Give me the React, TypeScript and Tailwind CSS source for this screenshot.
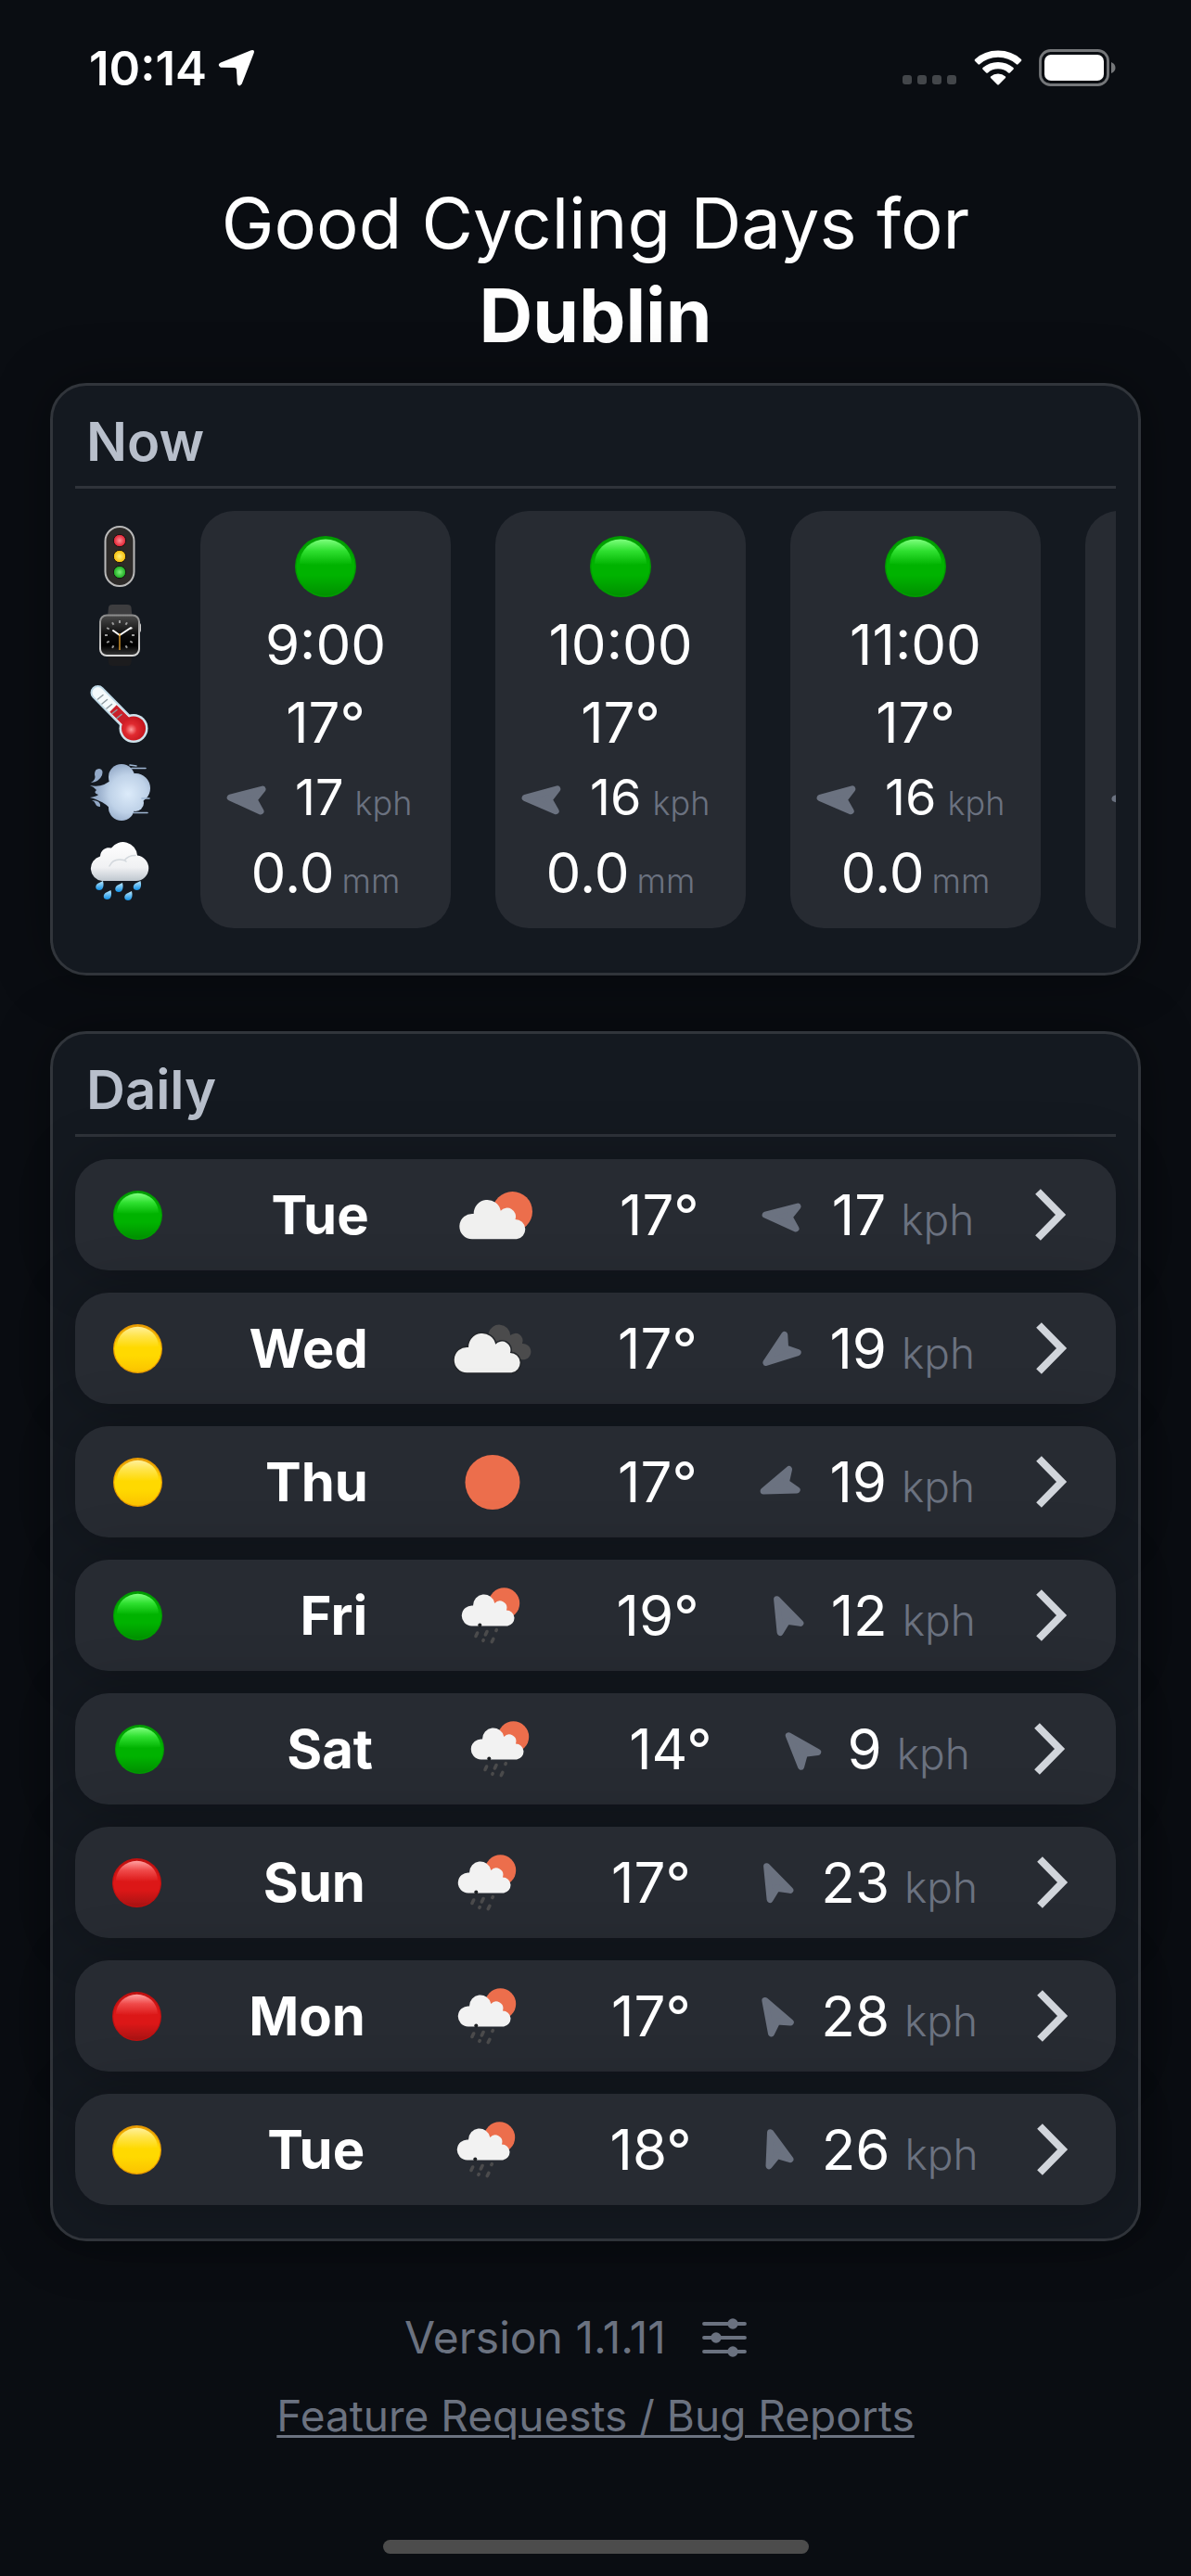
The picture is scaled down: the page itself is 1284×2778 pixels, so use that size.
import React from "react";

type Level = "green" | "yellow" | "red";
type Sky = "sun" | "partly" | "cloudy" | "rain";

interface Reading {
  time: string;
  temp: string;
  wind: string;
  rain: string;
}

interface Hour {
  heading: number;
  reading?: Reading;
}

interface Day {
  level: Level;
  name: string;
  sky: Sky;
  temp: string;
  wind: string;
  heading: number;
}

const hours: Hour[] = [
  { heading: -85, reading: { time: "9:00", temp: "17°", wind: "17", rain: "0.0" } },
  { heading: -86, reading: { time: "10:00", temp: "17°", wind: "16", rain: "0.0" } },
  { heading: -86, reading: { time: "11:00", temp: "17°", wind: "16", rain: "0.0" } },
  { heading: -88 },
];

const days: Day[] = [
  { level: "green", name: "Tue", sky: "partly", temp: "17°", wind: "17", heading: -85 },
  { level: "yellow", name: "Wed", sky: "cloudy", temp: "17°", wind: "19", heading: -127 },
  { level: "yellow", name: "Thu", sky: "sun", temp: "17°", wind: "19", heading: -111 },
  { level: "green", name: "Fri", sky: "rain", temp: "19°", wind: "12", heading: -25 },
  { level: "green", name: "Sat", sky: "rain", temp: "14°", wind: "9", heading: -41 },
  { level: "red", name: "Sun", sky: "rain", temp: "17°", wind: "23", heading: -25 },
  { level: "red", name: "Mon", sky: "rain", temp: "17°", wind: "28", heading: -30 },
  { level: "yellow", name: "Tue", sky: "rain", temp: "18°", wind: "26", heading: -17 },
];

const orbColors: Record<Level, { rim: string; gloss: string; mid: string; base: string; low: string }> = {
  green: { rim: "#009c00", gloss: "#7dff7d", mid: "#2fe030", base: "#00b300", low: "#009000" },
  yellow: { rim: "#e79a00", gloss: "#fff09a", mid: "#ffe44a", base: "#ffd900", low: "#fbc300" },
  red: { rim: "#c01010", gloss: "#ffa0a0", mid: "#f04a4a", base: "#dc1717", low: "#a81313" },
};

function Orb({ level, className }: { level: Level; className: string }) {
  const id = React.useId();
  const c = orbColors[level];
  return (
    <svg viewBox="0 0 66 66" className={className} role="img" aria-label={level}>
      <defs>
        <linearGradient id={id + "b"} x1="0" y1="0" x2="0" y2="1">
          <stop offset="0" stopColor={c.rim} />
          <stop offset="0.45" stopColor={c.base} />
          <stop offset="0.65" stopColor={c.base} />
          <stop offset="1" stopColor={c.low} />
        </linearGradient>
        <linearGradient id={id + "g"} x1="0" y1="0" x2="0" y2="1">
          <stop offset="0" stopColor={c.gloss} />
          <stop offset="0.45" stopColor={c.mid} />
          <stop offset="1" stopColor={c.base} />
        </linearGradient>
      </defs>
      <circle cx="33" cy="33" r="33" fill={c.rim} />
      <circle cx="33" cy="33" r="31.5" fill={`url(#${id}b)`} />
      <path d="M5 30A28 26.500 0 0 1 61 30Q33 33 5 30Z" fill={`url(#${id}g)`} />
    </svg>
  );
}

function WindArrow({ heading }: { heading: number }) {
  return (
    <svg viewBox="0 0 60 60" className="h-15 w-15 shrink-0" aria-hidden="true">
      <g transform={`rotate(${heading} 30 33)`}>
        <path d="M31 11L43 45L31 37L19 45Z" fill="#6b7280" stroke="#6b7280" strokeWidth="7" strokeLinejoin="round" />
      </g>
    </svg>
  );
}

const CLOUD =
  "M36 86.300A13.700 13.700 0 1 1 37.700 59A14.700 14.700 0 0 1 66.800 55.700A9.300 9.300 0 0 1 82.500 65A10.700 10.700 0 0 1 84 86.300Z";

function SkyIcon({ sky }: { sky: Sky }) {
  return (
    <svg viewBox="0 0 120 120" className="h-30 w-30" role="img" aria-label={sky}>
      {sky === "sun" && <circle cx="60" cy="60.500" r="29.500" fill="#ec6e4c" />}
      {sky === "partly" && (
        <>
          <circle cx="79.500" cy="56.500" r="21.500" fill="#ec6e4c" />
          <path d={CLOUD} fill="#f0f0ef" />
        </>
      )}
      {sky === "cloudy" && (
        <>
          <path
            d="M55.500 44A12 12 0 0 1 79.200 46A8 8 0 0 1 92 55A8.700 8.700 0 1 1 88 71L70 62Z"
            fill="#4b4b4c"
          />
          <g transform="translate(-3.600 0)">
            <path d={CLOUD} fill="#f0f0ef" stroke="#23262a" strokeWidth="3" paintOrder="stroke" />
          </g>
        </>
      )}
      {sky === "rain" && (
        <>
          <circle cx="73.500" cy="47" r="16.700" fill="#ec6e4c" />
          <g transform="translate(9.900 2.400) scale(0.800)">
            <path d={CLOUD} fill="#f2f2f2" />
          </g>
          <circle cx="47.300" cy="70.500" r="2" fill="#1e2124" />
          <g stroke="#4b4b4c" strokeWidth="3.600" strokeLinecap="round">
            <path d="M44.600 79L43 82.500M55 77.500L53.400 81M65.300 75.700L64.900 76.500M51.200 86.600L50.900 87.300M61.800 85.400L60.300 88.600" />
          </g>
        </>
      )}
    </svg>
  );
}

function TrafficLight() {
  return (
    <svg viewBox="0 0 66 66" className="h-[66px] w-[66px]" role="img" aria-label="Rating">
      <defs>
        <radialGradient id="tlr"><stop offset="0" stopColor="#ff8f96" /><stop offset="1" stopColor="#e01b2c" /></radialGradient>
        <radialGradient id="tly"><stop offset="0" stopColor="#fff27a" /><stop offset="1" stopColor="#f5b800" /></radialGradient>
        <radialGradient id="tlg"><stop offset="0" stopColor="#7df07a" /><stop offset="1" stopColor="#18a51c" /></radialGradient>
      </defs>
      <rect x="17.500" y="1" width="31" height="64" rx="15.500" fill="#2d2a28" stroke="#b9b9b9" strokeWidth="2" />
      <g stroke="#151312" strokeWidth="1">
        <circle cx="33" cy="16" r="6.700" fill="url(#tlr)" />
        <circle cx="33" cy="33" r="6.700" fill="url(#tly)" />
        <circle cx="33" cy="50" r="6.700" fill="url(#tlg)" />
      </g>
    </svg>
  );
}

function Watch() {
  const ticks = [0, 30, 60, 90, 120, 150, 210, 240, 270, 300, 330];
  return (
    <svg viewBox="0 0 66 66" className="h-[66px] w-[66px]" role="img" aria-label="Time">
      <defs>
        <linearGradient id="wf" x1="0" y1="0" x2="0" y2="1">
          <stop offset="0" stopColor="#4a4a4a" />
          <stop offset="0.5" stopColor="#0a0a0a" />
          <stop offset="0.75" stopColor="#000000" />
          <stop offset="1" stopColor="#3a3a3a" />
        </linearGradient>
        <linearGradient id="wc" x1="0" y1="0" x2="0" y2="1">
          <stop offset="0" stopColor="#8c8c8c" />
          <stop offset="1" stopColor="#d8d8d8" />
        </linearGradient>
      </defs>
      <path d="M20 13L21 3Q21.500 0 25 0H41Q45 0 45.500 3L46.500 13Z" fill="#3d3d3f" />
      <path d="M20 54L21 63Q21.500 66 25 66H41Q45 66 45.500 63L46.500 54Z" fill="#1c1c1e" />
      <rect x="51" y="20" width="5" height="10" rx="2" fill="#c9c9c9" />
      <rect x="12" y="11.500" width="42" height="43.500" rx="7" fill="url(#wf)" stroke="url(#wc)" strokeWidth="2" />
      <g stroke="#9a9a9a" strokeWidth="2">
        {ticks.map((t) => (
          <path key={t} d="M33 17V20" transform={`rotate(${t} 33 33)`} />
        ))}
      </g>
      <path d="M33 33L26 28M33 33L45 25" stroke="#fff" strokeWidth="2" strokeLinecap="round" />
      <path d="M33 31V49" stroke="#e8a32b" strokeWidth="1.300" />
    </svg>
  );
}

function Thermometer() {
  return (
    <svg viewBox="0 0 66 66" className="h-[66px] w-[66px]" role="img" aria-label="Temperature">
      <defs>
        <radialGradient id="tb" cx="0.400" cy="0.550" r="0.600">
          <stop offset="0" stopColor="#ff9a9a" />
          <stop offset="0.4" stopColor="#e02a30" />
          <stop offset="1" stopColor="#c2141c" />
        </radialGradient>
      </defs>
      <path d="M9.500 10L40 41" stroke="#bfd9e6" strokeWidth="16" strokeLinecap="round" />
      <circle cx="48" cy="48.500" r="15.500" fill="#cfe3ec" />
      <path d="M9.500 10L40 41" stroke="#f4fafc" strokeWidth="12" strokeLinecap="round" />
      <path d="M26 27L42 43" stroke="#c9202a" strokeWidth="10.500" />
      <circle cx="48" cy="48.500" r="13" fill="url(#tb)" />
      <path d="M9.500 17L15 12.500M14 22L19.500 17.500M19 27L24.500 22.500M25 32.500L30 28.500M30 37.500L35 33.500" stroke="#8e9aa0" strokeWidth="1.500" strokeLinecap="round" />
    </svg>
  );
}

function WindPuff() {
  return (
    <svg viewBox="0 0 66 66" className="h-[66px] w-[66px]" role="img" aria-label="Wind">
      <defs>
        <radialGradient id="wp" gradientUnits="userSpaceOnUse" cx="42" cy="34" r="34">
          <stop offset="0" stopColor="#dcebfa" />
          <stop offset="0.6" stopColor="#bfd2e8" />
          <stop offset="1" stopColor="#93a9c7" />
        </radialGradient>
      </defs>
      <g fill="url(#wp)">
        <circle cx="35" cy="16" r="14" />
        <circle cx="50" cy="28" r="16" />
        <circle cx="35" cy="49" r="14" />
        <circle cx="50" cy="44" r="9" />
        <path d="M1 25Q15 28 25 18L50 28L46 46L26 56Q22 44 1 38Q8 37 10 35Q4 33 8 30Q6 27 1 25Z" />
        <path d="M2 22Q8 19 6 13Q6 7 11 7Q16 8 14 14Q11 21 2 22Z" />
        <path d="M3 41Q13 41 12 48Q8 48 7 45Q6 42 3 41Z" />
      </g>
      <path d="M44 3L51 4M46 6.500H61M48 54.500H63M57 39H65" stroke="#9fb6d2" strokeWidth="1.600" strokeLinecap="round" />
    </svg>
  );
}

function RainCloud() {
  const drop = "M4 -6Q5.500 0 3 3Q0 5 -3 3Q-5 0 -2 -3Z";
  return (
    <svg viewBox="0 0 66 66" className="h-[66px] w-[66px]" role="img" aria-label="Rain">
      <defs>
        <linearGradient id="rc" x1="0" y1="0" x2="0" y2="1">
          <stop offset="0" stopColor="#ffffff" />
          <stop offset="0.65" stopColor="#f0f1f3" />
          <stop offset="1" stopColor="#bfc7cf" />
        </linearGradient>
        <linearGradient id="rd" x1="0" y1="0" x2="0" y2="1">
          <stop offset="0" stopColor="#bdeaff" />
          <stop offset="1" stopColor="#0e8fe6" />
        </linearGradient>
      </defs>
      <path d="M14 43A13.500 13.500 0 0 1 12 16.500A9.500 9.500 0 0 1 24 7.500A15.500 15.500 0 0 1 52 15.500A13.800 13.800 0 0 1 51 43Z" fill="url(#rc)" />
      <path d="M22 27Q25 20 33 20Q38 20 40 22M38 21Q42 15.500 50 15.500" stroke="#d3d8dd" strokeWidth="1.500" fill="none" strokeLinecap="round" />
      <g fill="url(#rd)">
        {["11 49", "19.500 59", "32 51", "42 60", "51.500 49"].map((p) => (
          <g key={p} transform={`translate(${p})`}>
            <path d={drop} />
          </g>
        ))}
      </g>
    </svg>
  );
}

function StatusBar() {
  return (
    <div className="flex h-[146px] items-center justify-between pl-24 pr-20">
      <div className="flex items-center gap-3">
        <span className="text-[51px] leading-none font-semibold">10:14</span>
        <svg viewBox="0 0 42 42" className="h-10 w-10" fill="#fff" aria-label="Location in use" role="img">
          <path d="M37.500 1.400Q42 0 40.600 4.500L27 39.500Q24 43.500 21.800 39L21 24Q21 21 18.500 21L3 20.700Q-1.500 18 3 15.200Z" />
        </svg>
      </div>
      <div className="flex items-center gap-[18px]">
        <svg viewBox="0 0 60 38" className="h-[38px] w-[60px]" fill="#43464a" aria-label="No signal" role="img">
          <rect x="1" y="27" width="10" height="10" rx="3" />
          <rect x="17" y="27" width="10" height="10" rx="3" />
          <rect x="33" y="27" width="10" height="10" rx="3" />
          <rect x="49" y="27" width="10" height="10" rx="3" />
        </svg>
        <svg viewBox="0 0 52 38" className="h-[38px] w-[52px]" fill="#fff" aria-label="Wi-Fi" role="img">
          <path d="M26 0.500Q41 0.500 51 10Q51.800 11 51 11.800L47.500 15.300Q46.700 16 45.800 15.300Q37.500 7.800 26 7.800T6.200 15.300Q5.300 16 4.500 15.300L1 11.800Q0.200 11 1 10Q11 0.500 26 0.500Z" />
          <path d="M26 13Q35.500 13 42.500 19Q43.300 20 42.500 20.800L38.800 24.400Q38 25 37 24.400Q32.500 20.300 26 20.300T15 24.400Q14 25 13.200 24.400L9.500 20.800Q8.700 20 9.500 19Q16.500 13 26 13Z" />
          <path d="M26 25.500Q30.500 25.500 34 28.500Q34.500 29.300 34 30L26.800 37.200Q26 37.800 25.200 37.200L18 30Q17.500 29.300 18 28.500Q21.500 25.500 26 25.500Z" />
        </svg>
        <svg viewBox="0 0 84 40" className="h-10 w-[84px]" aria-label="Battery full" role="img">
          <rect x="1.500" y="1.500" width="73" height="37" rx="11" fill="none" stroke="#75777a" strokeWidth="2.800" />
          <rect x="6" y="6" width="64" height="28" rx="7" fill="#fff" />
          <path d="M78 14Q82.500 16 82.500 20T78 26Z" fill="#75777a" />
        </svg>
      </div>
    </div>
  );
}

function Panel({ title, children }: { title: string; children: React.ReactNode }) {
  return (
    <section className="rounded-[39px] border-3 border-[#31353b] bg-[#141920] px-6 shadow-[0_0_60px_rgba(0,0,0,0.35)]">
      <h2 className="border-b-3 border-[#2f333a] px-3 pt-7 pb-4 text-[58px] leading-16 font-semibold text-[#b8bfcb]">
        {title}
      </h2>
      {children}
    </section>
  );
}

function HourCard({ hour }: { hour: Hour }) {
  const { heading, reading } = hour;
  return (
    <li className="flex w-[270px] shrink-0 flex-col items-center rounded-[36px] bg-[#272b32] py-5 text-[60px] leading-none">
      <div className="flex h-20 items-center">
        <Orb level="green" className="h-[66px] w-[66px]" />
      </div>
      <div className="flex h-[84px] items-center pt-1">{reading?.time}</div>
      <div className="flex h-[84px] items-center pt-1">{reading?.temp}</div>
      <div className="flex h-[78px] w-full items-center gap-[18px] pt-1 pl-6">
        <WindArrow heading={heading} />
        {reading && (
          <span className="flex items-baseline gap-3 text-[54px]">
            {reading.wind}
            <span className="text-[36px] font-light text-[#6b7280]">kph</span>
          </span>
        )}
      </div>
      <div className="flex h-[84px] items-baseline gap-2 pt-[14px]">
        {reading && (
          <>
            {reading.rain}
            <span className="text-[36px] font-light text-[#6b7280]">mm</span>
          </>
        )}
      </div>
    </li>
  );
}

function DayRow({ day }: { day: Day }) {
  return (
    <li className="rounded-[36px] shadow-[0_0_60px_rgba(0,0,0,0.25)]">
      <button
        type="button"
        className="flex h-[120px] w-full items-center justify-around rounded-[36px] bg-[#272b32] px-2 text-[60px] leading-none"
      >
        <span className="flex w-[100px] justify-center">
          <Orb level={day.level} className="h-[53px] w-[53px]" />
        </span>
        <span className="w-[180px] text-right text-[58px] font-bold">{day.name}</span>
        <span className="flex w-[232px] justify-center">
          <SkyIcon sky={day.sky} />
        </span>
        <span>{day.temp}</span>
        <span className="flex items-center gap-5 pr-2 pl-11">
          <WindArrow heading={day.heading} />
          <span className="flex items-baseline gap-4">
            {day.wind}
            <span className="text-[46px] font-light text-[#6b7280]">kph</span>
          </span>
        </span>
        <svg viewBox="0 0 108 108" className="h-[108px] w-[108px] shrink-0" aria-hidden="true">
          <path d="M42 29L66.500 54L42 79" fill="none" stroke="#d1d5db" strokeWidth="8" />
        </svg>
      </button>
    </li>
  );
}

export default function App() {
  return (
    <div className="flex min-h-screen flex-col bg-[#0a0d12] font-['Inter','Liberation_Sans',sans-serif] text-white">
      <StatusBar />
      <main className="flex flex-1 flex-col px-[54px] pt-11">
        <h1 className="pb-[22px] text-center text-[76px] leading-[100px]">
          Good Cycling Days for
          <br />
          <strong className="text-[80px] font-bold">Dublin</strong>
        </h1>

        <Panel title="Now">
          <div className="flex gap-[39px] pt-6 pb-12">
            <div className="flex w-24 shrink-0 flex-col items-center gap-[19px] pt-4">
              <TrafficLight />
              <Watch />
              <Thermometer />
              <WindPuff />
              <RainCloud />
            </div>
            <ul className="flex min-w-0 flex-1 gap-12 overflow-x-auto [scrollbar-width:none]">
              {hours.map((hour, i) => (
                <HourCard key={i} hour={hour} />
              ))}
            </ul>
          </div>
        </Panel>

        <div className="pt-15">
          <Panel title="Daily">
            <ul className="flex flex-col gap-6 pt-6 pb-9">
              {days.map((day, i) => (
                <DayRow key={i} day={day} />
              ))}
            </ul>
          </Panel>
        </div>

        <footer className="flex flex-col items-center gap-6 pt-[74px] text-[46px] leading-15 text-[#6b7280]">
          <div className="flex items-center gap-9 pr-10">
            <span className="text-[48px]">Version 1.1.11</span>
            <button type="button" aria-label="Settings">
              <svg viewBox="0 0 54 54" className="h-[54px] w-[54px]" stroke="currentColor" strokeWidth="3.800" strokeLinecap="round" fill="currentColor">
                <path d="M5 12H49M5 27H49M5 42H49" />
                <circle cx="36" cy="12" r="3.800" />
                <circle cx="18" cy="27" r="3.800" />
                <circle cx="36" cy="42" r="3.800" />
              </svg>
            </button>
          </div>
          <a href="#feedback" className="underline decoration-3 underline-offset-4">
            Feature Requests / Bug Reports
          </a>
        </footer>
      </main>
      <div className="mx-auto mb-6 h-[15px] w-[459px] rounded-full bg-[#4c4c4c]" />
    </div>
  );
}
